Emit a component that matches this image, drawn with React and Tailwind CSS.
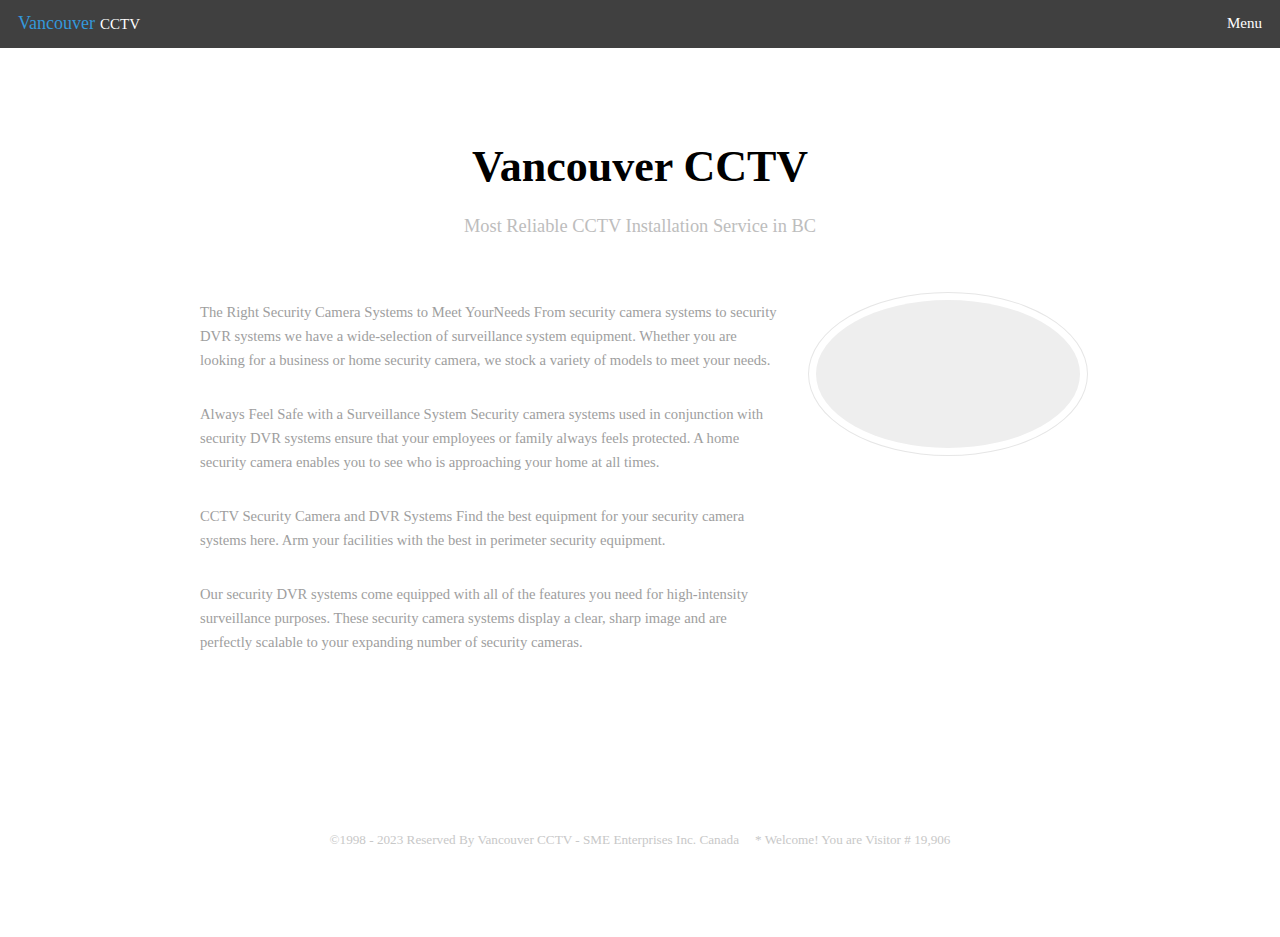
const paragraphs = [
  "The Right Security Camera Systems to Meet YourNeeds From security camera systems to security DVR systems we have a wide-selection of surveillance system equipment. Whether you are looking for a business or home security camera, we stock a variety of models to meet your needs.",
  "Always Feel Safe with a Surveillance System Security camera systems used in conjunction with security DVR systems ensure that your employees or family always feels protected. A home security camera enables you to see who is approaching your home at all times.",
  "CCTV Security Camera and DVR Systems Find the best equipment for your security camera systems here. Arm your facilities with the best in perimeter security equipment.",
  "Our security DVR systems come equipped with all of the features you need for high-intensity surveillance purposes. These security camera systems display a clear, sharp image and are perfectly scalable to your expanding number of security cameras.",
];

export default function App() {
  return (
    <div className="min-h-[937px] bg-white font-['Liberation_Serif',serif]">
      {/* Top bar */}
      <header className="h-12 bg-[#404040] flex items-center justify-between px-[18px]">
        <a href="#" className="flex items-baseline gap-[5px] -mt-[1px]">
          <span className="text-[18px] text-[#3498db]">Vancouver</span>
          <span className="text-[15px] text-white">CCTV</span>
        </a>
        <button className="text-[15px] text-white -mt-[1px]">Menu</button>
      </header>

      {/* Hero */}
      <section className="pt-[92px] text-center">
        <h1 className="text-[44px] font-bold leading-[54px] text-black">Vancouver CCTV</h1>
        <p className="mt-[20px] text-[18.4px] leading-[24px] text-[#bdbdbd]">
          Most Reliable CCTV Installation Service in BC
        </p>
      </section>

      {/* Content */}
      <main className="mt-[54px] flex justify-center">
        <div className="flex gap-[28px] pl-[8px]">
          <div className="w-[580px] pt-[8px] flex flex-col gap-[30px]">
            {paragraphs.map((p, i) => (
              <p key={i} className="text-[14.65px] leading-[24px] text-[#9e9e9e]">
                {p}
              </p>
            ))}
          </div>
          <div className="w-[280px] h-[164px] rounded-[50%] border border-[#e6e6e6] p-[7px] shrink-0">
            <div className="w-full h-full rounded-[50%] bg-[#eeeeee]" />
          </div>
        </div>
      </main>

      {/* Footer */}
      <footer className="mt-[176px] flex justify-center gap-[16px] text-[13.2px] text-[#c8c8c8]">
        <span>©1998 - 2023 Reserved By Vancouver CCTV - SME Enterprises Inc. Canada</span>
        <span>* Welcome! You are Visitor # 19,906</span>
      </footer>
    </div>
  );
}
